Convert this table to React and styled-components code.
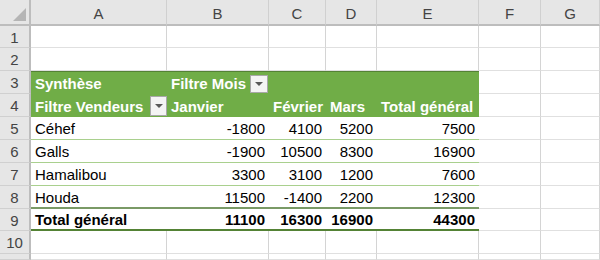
import React from "react";
import styled, { createGlobalStyle, css } from "styled-components";

const Global = createGlobalStyle`
  html, body { margin: 0; padding: 0; background: #ffffff; }
  body { font-family: "Liberation Sans", Arial, sans-serif; }
`;

const Sheet = styled.div`
  display: grid;
  grid-template-columns: 31px 136px 102px 57px 51px 102px 62px 1fr;
  grid-template-rows: 26px 22px 23px 23px 23px 23px 23px 23px 23px 22px 23px 1fr;
  width: 600px;
  height: 260px;
  overflow: hidden;
  font-size: 15px;
  color: #000;
`;

const Corner = styled.div`
  background: #e6e6e6;
  border-right: 2px solid #bdbdbd;
  border-bottom: 2px solid #bdbdbd;
  box-sizing: border-box;
  display: flex;
  align-items: flex-end;
  justify-content: flex-end;
  padding: 0 3px 3px 0;
`;

const ColHead = styled.div`
  background: #e6e6e6;
  border-right: 1px solid #d0d0d0;
  border-bottom: 2px solid #bdbdbd;
  box-sizing: border-box;
  display: flex;
  align-items: center;
  justify-content: center;
  color: #444;
  font-size: 15px;
  padding-top: 2px;
`;

const RowHead = styled.div`
  background: #e6e6e6;
  border-right: 2px solid #bdbdbd;
  border-bottom: 1px solid #d0d0d0;
  box-sizing: border-box;
  display: flex;
  align-items: center;
  justify-content: center;
  color: #444;
  font-size: 15px;
  padding-top: 1px;
`;

const kinds = {
  plain: css`
    background: #fff;
    border-right: 1px solid #d4d4d4;
    border-bottom: 1px solid #e0e0e0;
  `,
  head: css`
    background: #70ad47;
    color: #fff;
    font-weight: bold;
  `,
  data: css`
    background: #fff;
    border-bottom: 1px solid #a9d08e;
  `,
  last: css`
    background: #fff;
    border-bottom: 2px solid #7a9a66;
  `,
  total: css`
    background: #fff;
    font-weight: bold;
    border-bottom: 2px solid #548235;
  `,
};

const Cell = styled.div`
  box-sizing: border-box;
  display: flex;
  align-items: center;
  justify-content: ${(p) =>
    p.$right ? "flex-end" : p.$drop ? "space-between" : "flex-start"};
  padding: 1px ${(p) => (p.$drop ? "0" : "4px")} 0 4px;
  white-space: nowrap;
  overflow: hidden;
  ${(p) => kinds[p.$kind || "plain"]}
  ${(p) => p.$topLine && css`border-top: 1px solid #548235;`}
`;

const DropBtn = styled.span`
  box-sizing: border-box;
  flex: none;
  width: ${(p) => p.$w || 17}px;
  height: ${(p) => p.$h || 18}px;
  background: #f4f4f4;
  border: 1px solid #a8a8a8;
  display: flex;
  align-items: center;
  justify-content: center;
  margin-left: 4px;
`;

const Arrow = styled.span`
  width: 0;
  height: 0;
  border-left: 4px solid transparent;
  border-right: 4px solid transparent;
  border-top: 4px solid #595959;
`;

const Drop = ({ w, h }) => (
  <DropBtn $w={w} $h={h}>
    <Arrow />
  </DropBtn>
);

const cols = ["A", "B", "C", "D", "E", "F", "G"];

const people = [
  ["Céhef", -1800, 4100, 5200, 7500],
  ["Galls", -1900, 10500, 8300, 16900],
  ["Hamalibou", 3300, 3100, 1200, 7600],
  ["Houda", 11500, -1400, 2200, 12300],
];

const blanks = (n, key) =>
  Array.from({ length: n }, (_, i) => <Cell key={key + "-" + i} $kind="plain" />);

export default function App() {
  return (
    <>
      <Global />
      <Sheet>
        <Corner>
          <svg width="13" height="13" viewBox="0 0 13 13">
            <polygon points="13,0 13,13 0,13" fill="#b5b5b5" />
          </svg>
        </Corner>
        {cols.map((c) => (
          <ColHead key={c}>{c}</ColHead>
        ))}

        <RowHead>1</RowHead>
        {blanks(7, "r1")}

        <RowHead>2</RowHead>
        {blanks(7, "r2")}

        <RowHead>3</RowHead>
        <Cell $kind="head" $topLine>Synthèse</Cell>
        <Cell $kind="head" $topLine>
          Filtre Mois
          <Drop w={18} h={18} />
        </Cell>
        <Cell $kind="head" $topLine />
        <Cell $kind="head" $topLine />
        <Cell $kind="head" $topLine />
        {blanks(2, "r3")}

        <RowHead>4</RowHead>
        <Cell $kind="head" $drop>
          Filtre Vendeurs
          <Drop w={17} h={20} />
        </Cell>
        <Cell $kind="head">Janvier</Cell>
        <Cell $kind="head">Février</Cell>
        <Cell $kind="head">Mars</Cell>
        <Cell $kind="head">Total général</Cell>
        {blanks(2, "r4")}

        {people.map((row, r) => {
          const kind = r === people.length - 1 ? "last" : "data";
          return (
            <React.Fragment key={row[0]}>
              <RowHead>{5 + r}</RowHead>
              <Cell $kind={kind}>{row[0]}</Cell>
              {row.slice(1).map((v, i) => (
                <Cell key={i} $right $kind={kind}>
                  {v}
                </Cell>
              ))}
              {blanks(2, "p" + r)}
            </React.Fragment>
          );
        })}

        <RowHead>9</RowHead>
        <Cell $kind="total">Total général</Cell>
        <Cell $kind="total" $right>11100</Cell>
        <Cell $kind="total" $right>16300</Cell>
        <Cell $kind="total" $right>16900</Cell>
        <Cell $kind="total" $right>44300</Cell>
        {blanks(2, "r9")}

        <RowHead>10</RowHead>
        {blanks(7, "r10")}

        <RowHead />
        {blanks(7, "r11")}
      </Sheet>
    </>
  );
}
